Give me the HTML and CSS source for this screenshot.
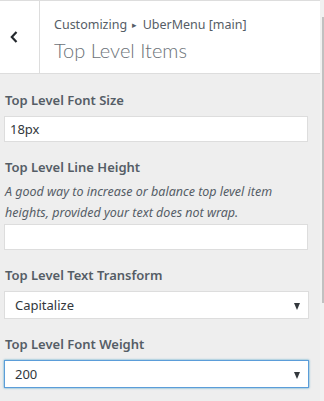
FILE: index.html
```html
<!DOCTYPE html>
<html lang="en">
<head>
    <meta charset="UTF-8">
    <meta name="viewport" content="width=device-width, initial-scale=1.0">
    <title>Customizing - Top Level Items</title>
    <link rel="stylesheet" href="styles.css">
</head>
<body>
    <div class="frame">
        <div class="panel">
            <div class="panel-head">
                <button class="back" aria-label="Back">
                    <svg width="10" height="14" viewBox="0 0 10 14">
                        <path d="M7.5 2 L2.8 7 L7.5 12" fill="none" stroke="#23282d" stroke-width="2.2"/>
                    </svg>
                </button>
                <div class="head-title">
                    <div class="crumb">Customizing <span class="sep">&#9656;</span> UberMenu [main]</div>
                    <h3>Top Level Items</h3>
                </div>
            </div>

            <div class="controls">
                <div class="control">
                    <label class="ctl-title">Top Level Font Size</label>
                    <div class="field">18px</div>
                </div>

                <div class="control">
                    <label class="ctl-title">Top Level Line Height</label>
                    <p class="desc">A good way to increase or balance top level item heights, provided your text does not wrap.</p>
                    <div class="field"></div>
                </div>

                <div class="control">
                    <label class="ctl-title">Top Level Text Transform</label>
                    <div class="select">Capitalize <span class="arrow"></span></div>
                </div>

                <div class="control">
                    <label class="ctl-title">Top Level Font Weight</label>
                    <div class="select focus">200 <span class="arrow"></span></div>
                </div>
            </div>
        </div>
        <div class="scrollbar"><div class="thumb"></div></div>
    </div>
</body>
</html>
```

FILE: styles.css
```css
* {
    margin: 0;
    padding: 0;
    box-sizing: border-box;
}

body {
    background: #eee;
    font-family: "Noto Sans", "Open Sans", sans-serif;
    color: #555d66;
    overflow: hidden;
}

.frame {
    display: flex;
    height: 401px;
}

.panel {
    flex: 1;
    background: #eee;
}

.panel-head {
    display: flex;
    height: 74px;
    background: #fff;
    border-top: 1px solid #ddd;
    border-bottom: 1px solid #ddd;
}

.back {
    width: 40px;
    border: none;
    border-right: 1px solid #ddd;
    background: #fff;
    display: flex;
    align-items: center;
    justify-content: center;
    padding-right: 11px;
}

.head-title {
    padding: 14px 0 0 14px;
}

.crumb {
    font-size: 12.5px;
    line-height: 20px;
}

.crumb .sep {
    font-size: 9px;
    vertical-align: 1px;
    margin: 0 2px;
}

.head-title h3 {
    font-family: Lato, "Noto Sans", sans-serif;
    font-size: 20px;
    font-weight: 300;
    line-height: 28px;
    margin-top: 1px;
    color: #6c7278;
}

.controls {
    padding: 16px 12px 0 4px;
}

.control {
    margin-bottom: 15px;
}

.ctl-title {
    display: block;
    font-size: 13px;
    font-weight: 600;
    line-height: 20px;
    margin: 0 0 6px 1px;
}

.desc {
    font-size: 12.5px;
    font-style: italic;
    line-height: 21px;
    margin: -2px 0 1px 1px;
}

.field {
    height: 26px;
    background: #fff;
    border: 1px solid #ddd;
    font-size: 13px;
    line-height: 24px;
    padding-left: 5px;
    color: #32373c;
}

.select {
    position: relative;
    height: 28px;
    margin-right: -1px;
    background: #fff;
    border: 1px solid #ddd;
    font-size: 13px;
    line-height: 26px;
    padding-left: 10px;
    color: #32373c;
}

.select.focus {
    border-color: #5b9dd9;
    box-shadow: 0 0 2px rgba(30, 140, 190, 0.8);
}

.arrow {
    position: absolute;
    right: 8px;
    top: 11px;
    border-left: 3.5px solid transparent;
    border-right: 3.5px solid transparent;
    border-top: 7px solid #32373c;
}

.scrollbar {
    width: 4px;
    background: #f1f1f1;
    padding-left: 2px;
}

.thumb {
    width: 2px;
    height: 286px;
    margin-top: 17px;
    background: #c1c1c1;
}
```
